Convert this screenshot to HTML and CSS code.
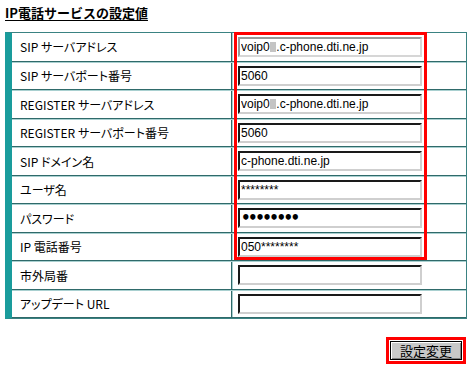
FILE: index.html
```html
<!DOCTYPE html>
<html lang="ja">
<head>
    <meta charset="UTF-8">
    <meta name="viewport" content="width=device-width, initial-scale=1.0">
    <title>IP電話サービスの設定値</title>
    <link rel="stylesheet" href="styles.css">
</head>
<body>
    <div class="page">
        <h2 class="title">IP電話サービスの設定値</h2>

        <div class="settings">
            <div class="row">
                <div class="label">SIP サーバアドレス</div>
                <div class="value">
                    <span class="field-wrap">
                        <input type="text" class="field dim" value="voip0&#8199;.c-phone.dti.ne.jp">
                        <span class="blur"></span>
                    </span>
                </div>
            </div>
            <div class="row">
                <div class="label">SIP サーバポート番号</div>
                <div class="value"><input type="text" class="field" value="5060"></div>
            </div>
            <div class="row">
                <div class="label">REGISTER サーバアドレス</div>
                <div class="value">
                    <span class="field-wrap">
                        <input type="text" class="field" value="voip0&#8199;.c-phone.dti.ne.jp">
                        <span class="blur"></span>
                    </span>
                </div>
            </div>
            <div class="row">
                <div class="label">REGISTER サーバポート番号</div>
                <div class="value"><input type="text" class="field" value="5060"></div>
            </div>
            <div class="row">
                <div class="label">SIP ドメイン名</div>
                <div class="value"><input type="text" class="field" value="c-phone.dti.ne.jp"></div>
            </div>
            <div class="row">
                <div class="label">ユーザ名</div>
                <div class="value"><input type="text" class="field" value="********"></div>
            </div>
            <div class="row">
                <div class="label">パスワード</div>
                <div class="value"><input type="password" class="field secret" value="12345678"></div>
            </div>
            <div class="row">
                <div class="label">IP 電話番号</div>
                <div class="value"><input type="text" class="field" value="050********"></div>
            </div>
            <div class="row">
                <div class="label">市外局番</div>
                <div class="value"><input type="text" class="field" value=""></div>
            </div>
            <div class="row">
                <div class="label">アップデート URL</div>
                <div class="value"><input type="text" class="field" value=""></div>
            </div>

            <!-- highlight drawn over the input column -->
            <div class="mark"></div>
        </div>

        <div class="actions">
            <span class="mark-btn"><button type="button" class="btn">設定変更</button></span>
        </div>
    </div>
</body>
</html>
```

FILE: styles.css
```css
body {
    margin: 0;
    background-color: #ffffff;
    font-family: "Noto Sans CJK JP", sans-serif;
    color: #000;
}
.page {
    padding: 3px 3px 0 5px;
}
.title {
    margin: 0 0 10px;
    font-size: 13px;
    font-weight: bold;
    line-height: 19px;
    text-decoration: underline;
    text-underline-offset: 2px;
}
.settings {
    position: relative;
    width: 454px;
    border: 1px solid #3a8282;
    border-left: 7px solid #1a9c9c;
}
.row {
    display: flex;
    height: 28.5px;
    box-sizing: border-box;
    border-bottom: 1px solid #2f6a6a;
}
.row + .row {
    border-top: 1px solid #a9d0d0;
}
.row:last-of-type {
    border-bottom: none;
}
.label {
    width: 220px;
    box-sizing: border-box;
    padding-left: 8px;
    border-right: 1px solid #2f6a6a;
    display: flex;
    align-items: center;
    font-size: 12px;
    font-feature-settings: "palt";
}
.value {
    flex: 1;
    border-left: 1px solid #a9d0d0;
    padding-left: 5px;
    display: flex;
    align-items: center;
}
.field-wrap {
    position: relative;
    display: inline-block;
}
.field {
    display: block;
    width: 184px;
    height: 20px;
    box-sizing: border-box;
    margin: 0;
    padding: 0 1px;
    border: 2px solid;
    border-color: #1a1a1a #cfcfcf #cfcfcf #1a1a1a;
    font-family: "Liberation Sans", Arial, sans-serif;
    font-size: 12px;
    color: #000;
    background: #fff;
    outline: none;
}
.field.dim {
    border-color: #9a9a9a #d6d6d6 #d6d6d6 #9a9a9a;
}
.field.secret {
    font-family: "DejaVu Sans", sans-serif;
    font-size: 15px;
    font-weight: bold;
    letter-spacing: -2.5px;
}
.blur {
    position: absolute;
    left: 32px;
    top: 5px;
    width: 6px;
    height: 10px;
    background: #c4c4c4;
}
.mark {
    position: absolute;
    left: 222px;
    top: -1px;
    width: 193px;
    height: 228px;
    box-sizing: border-box;
    border: 3px solid #ff0000;
    pointer-events: none;
}
.actions {
    display: flex;
    justify-content: flex-end;
    margin-top: 18px;
    padding-right: 1px;
}
.mark-btn {
    display: inline-block;
    border: 3px solid #ff0000;
    padding: 1px;
}
.btn {
    display: block;
    width: 72px;
    height: 19px;
    padding: 0;
    border: 1px solid #000;
    background-color: #c8c8c8;
    box-shadow: inset 1px 1px 0 #ffffff, inset -1px -1px 0 #808080;
    font-family: "Noto Sans CJK JP", sans-serif;
    font-size: 13px;
    line-height: 15px;
    color: #000;
    cursor: pointer;
}
```
